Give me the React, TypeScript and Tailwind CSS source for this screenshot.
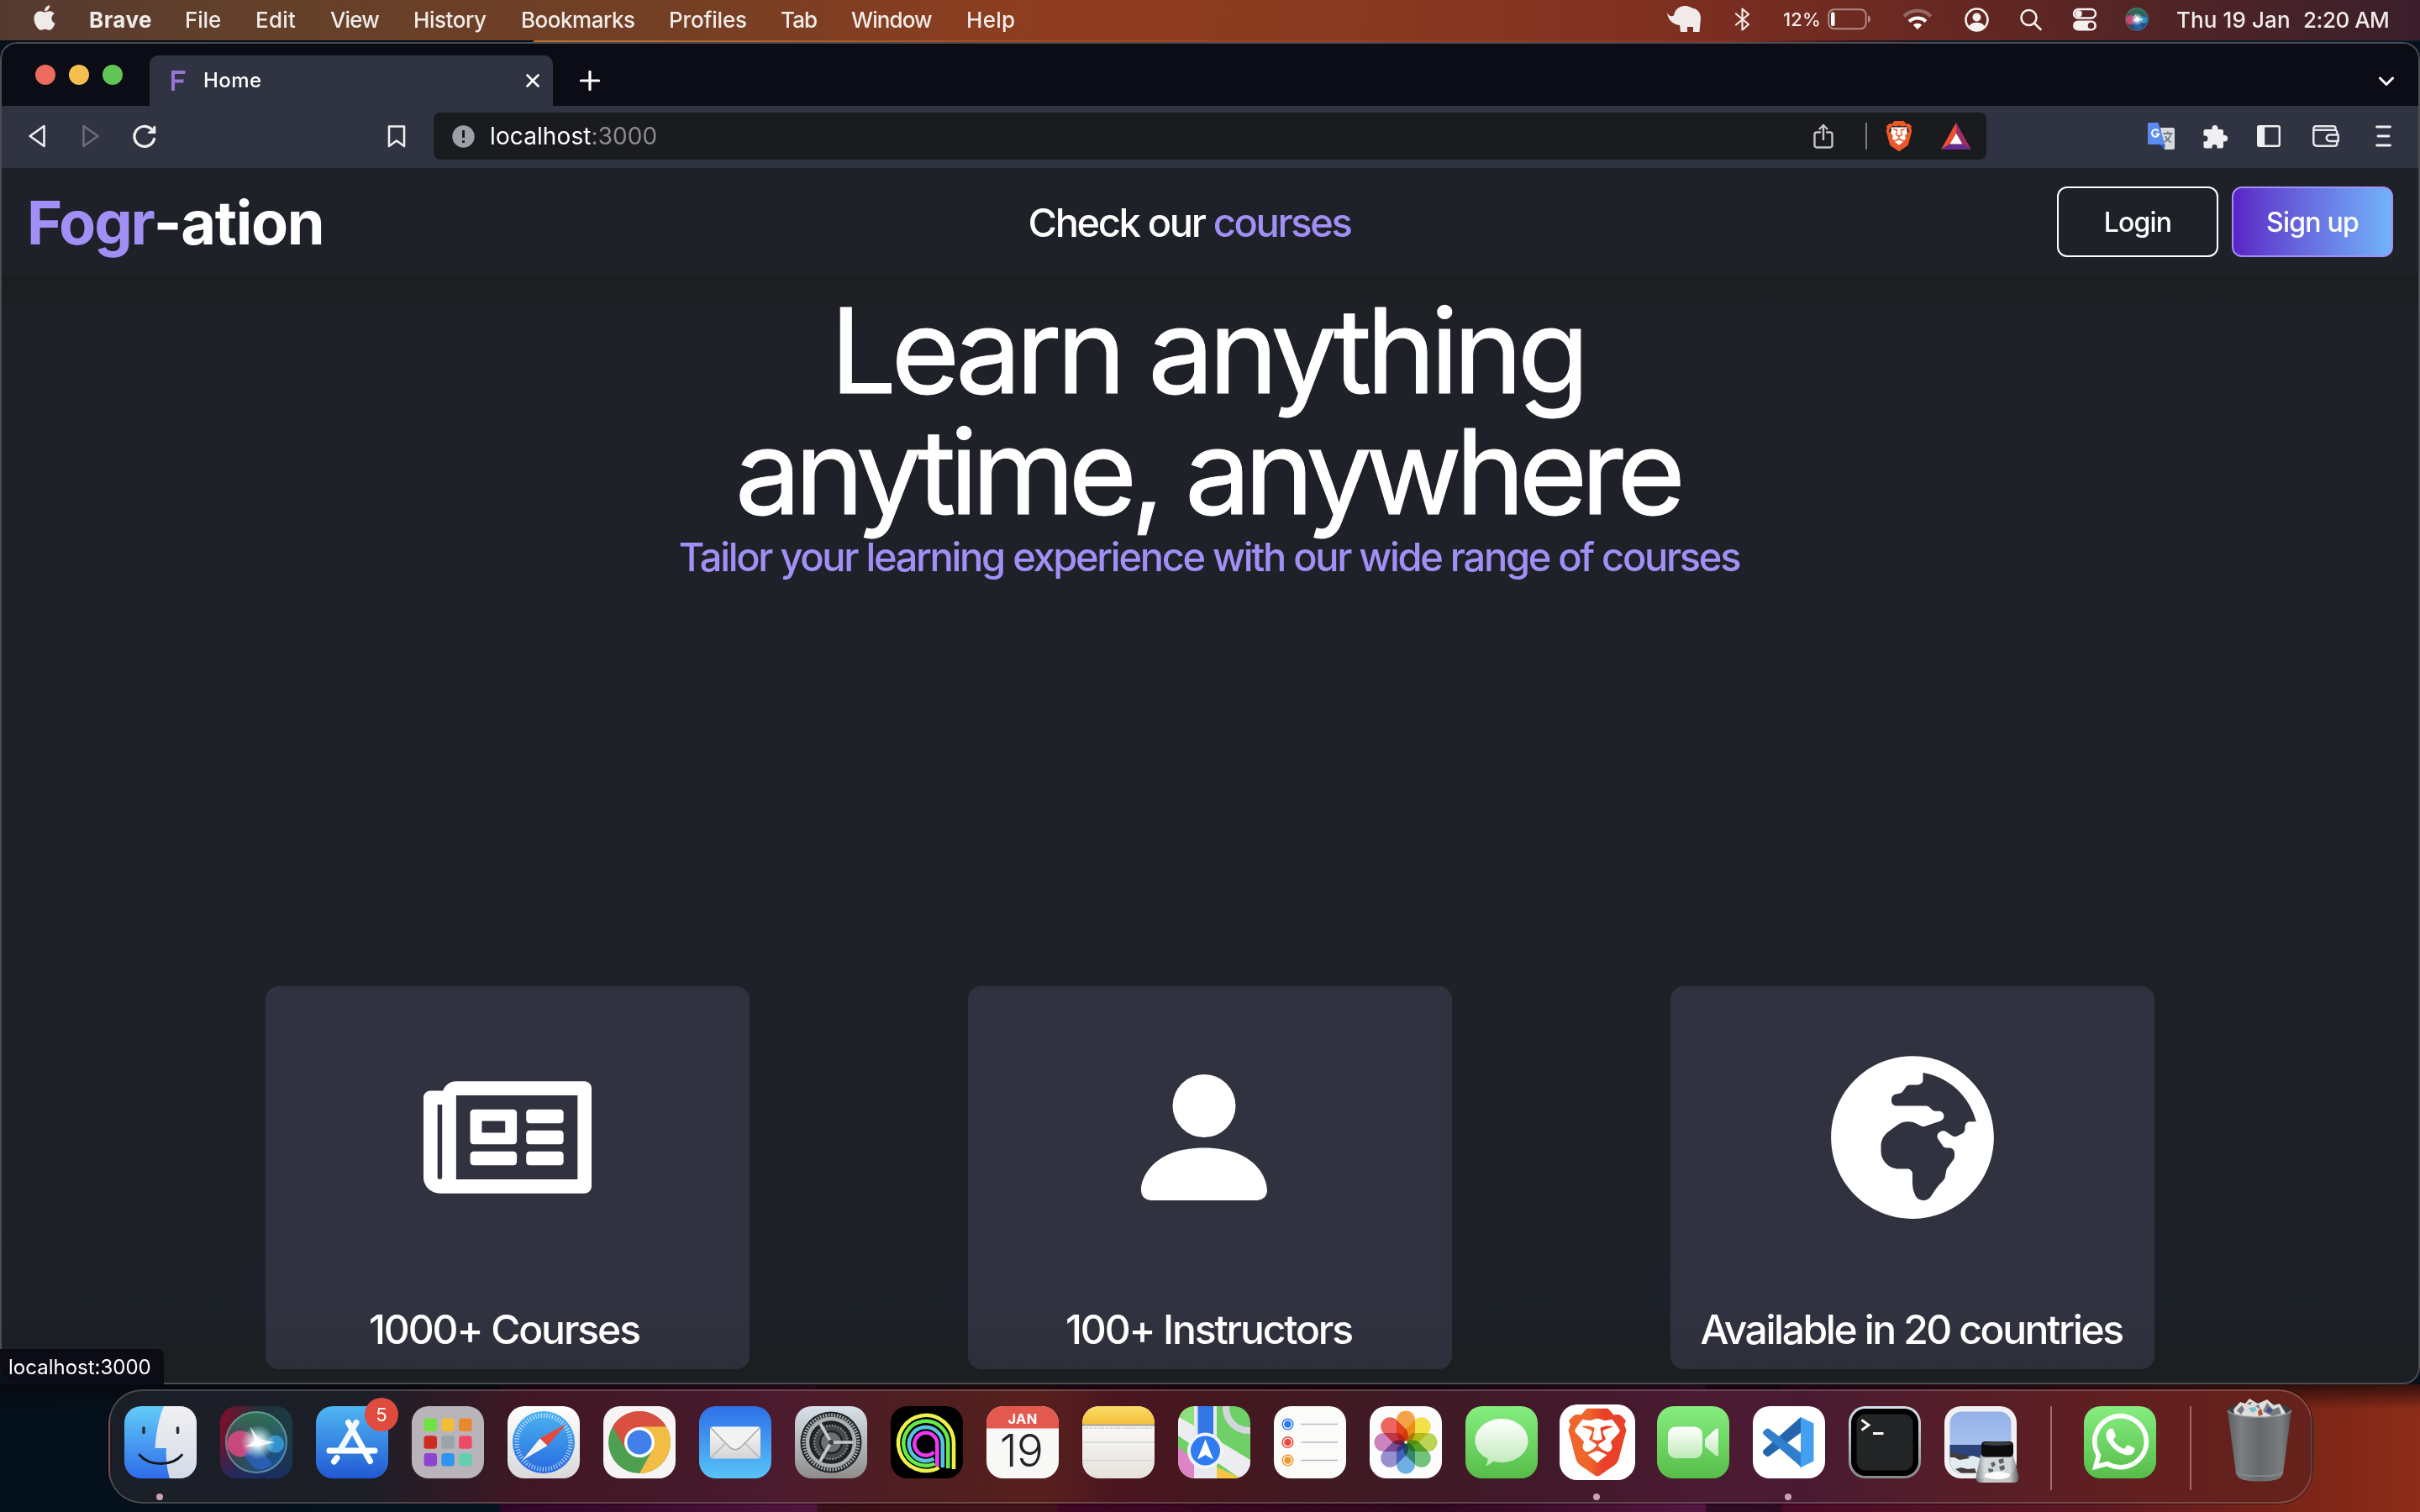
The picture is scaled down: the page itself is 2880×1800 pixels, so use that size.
import React from "react";
import { FaApple, FaWhatsapp } from "react-icons/fa";
import { SiBrave } from "react-icons/si";

/* ---------- macOS menu bar ---------- */

const menus = [
  { label: "Brave", cls: "w-[114px] font-bold tracking-[0.45px]" },
  { label: "File", cls: "w-[84px] tracking-[-0.14px]" },
  { label: "Edit", cls: "w-[89px] tracking-[0.23px]" },
  { label: "View", cls: "w-[99px] tracking-[-0.9px]" },
  { label: "History", cls: "w-[128px] tracking-[-0.45px]" },
  { label: "Bookmarks", cls: "w-[176px] tracking-[-0.48px]" },
  { label: "Profiles", cls: "w-[133px] tracking-[-0.18px]" },
  { label: "Tab", cls: "w-[84px] tracking-[-0.9px]" },
  { label: "Window", cls: "w-[137px] tracking-[-0.9px]" },
  { label: "Help", cls: "tracking-[0.27px]" },
];

function MenuBar() {
  return (
    <header className="flex h-12 shrink-0 items-center bg-[linear-gradient(to_right,#553a30_0,#63402a_300px,#743f24_800px,#8f3d20_1240px,#8a3a20_1600px,#803020_1950px,#642722_2350px,#4f2427_2600px,#3a1f2b_2880px)] pb-[2px] text-[26px] font-medium text-[#f0ebe8]">
      <FaApple className="-mt-1 ml-[36px] h-[34px] w-[34px] shrink-0" />
      <nav className="ml-[36px] flex">
        {menus.map((m) => (
          <span key={m.label} className={`block shrink-0 whitespace-nowrap ${m.cls}`}>{m.label}</span>
        ))}
      </nav>
      <div className="ml-auto flex w-[896px] shrink-0 items-center">
        <svg className="h-8 w-10 shrink-0" viewBox="0 0 40 32" fill="currentColor">
          <path d="M0 8C2 12 5 13 8 11.500C9 5 14 0 21 0C26 0 28 2 31 3C37 4 40 9 40 15L38.500 31H31V25H24V31H16L15 23C7 22 1 17 0 8Z" />
        </svg>
        <svg className="ml-10 h-7 w-[19px] shrink-0" viewBox="0 0 19 28" fill="none" stroke="currentColor" strokeWidth="2.2" strokeLinejoin="round" strokeLinecap="round">
          <path d="M2 7.500L17 20L9.500 26.500V1.500L17 8L2 20.500" />
        </svg>
        <span className="ml-[39px] w-[44px] shrink-0 text-[22px] tracking-[0.1px]">12%</span>
        <svg className="ml-[9px] h-[26px] w-[52px] shrink-0" viewBox="0 0 52 26">
          <rect x="1.200" y="1.200" width="44.500" height="23" rx="6.500" fill="none" stroke="#f0ebe8" strokeOpacity=".5" strokeWidth="2" />
          <rect x="4" y="4.500" width="4.500" height="16.500" rx="2" fill="#fff" />
          <path d="M48 8.500C50.500 9.500 51 11 51 12.700S50.500 16 48 17Z" fill="#f0ebe8" fillOpacity=".5" />
        </svg>
        <svg className="ml-[37px] h-[26px] w-9 shrink-0" viewBox="0 0 36 26" fill="none" stroke="#fff" strokeWidth="4">
          <path d="M2 9.500A22.500 22.500 0 0 1 34 9.500" strokeOpacity=".3" />
          <path d="M8 15.500A14.200 14.200 0 0 1 28 15.500" />
          <path d="M18 25L12.800 19.800A7.500 7.500 0 0 1 23.200 19.800Z" fill="#fff" stroke="none" />
        </svg>
        <svg className="ml-[38px] h-[29px] w-[29px] shrink-0" viewBox="0 0 29 29">
          <circle cx="14.500" cy="14.500" r="13" fill="none" stroke="#f5f0ee" strokeWidth="2.600" />
          <circle cx="14.500" cy="11.500" r="5" fill="#f5f0ee" />
          <path d="M5 23C7 18.500 11 17.800 14.500 17.800S22 18.500 24 23C21 26.500 18 27.500 14.500 27.500S8 26.500 5 23Z" fill="#f5f0ee" />
        </svg>
        <svg className="ml-[36px] h-7 w-7 shrink-0" viewBox="0 0 28 28" fill="none" stroke="#f5f0ee" strokeWidth="2.600" strokeLinecap="round">
          <circle cx="11.500" cy="12" r="9" />
          <path d="M18 18.800L25.500 26" />
        </svg>
        <svg className="ml-[35px] h-7 w-[30px] shrink-0" viewBox="0 0 30 28">
          <rect x="2" y="2" width="26" height="10.500" rx="5.250" fill="none" stroke="#f5f0ee" strokeWidth="2.400" />
          <circle cx="7.800" cy="7.200" r="4" fill="#f5f0ee" />
          <rect x="1" y="15.500" width="28" height="12" rx="6" fill="#f5f0ee" />
          <circle cx="22.500" cy="21.500" r="3.800" fill="#5a2627" />
        </svg>
        <svg className="ml-[33px] h-7 w-7 shrink-0" viewBox="0 0 86 86">
          <SiriOrb cx={43} cy={43} r={42} id="mini" />
        </svg>
        <span className="ml-[33px] w-[151px] shrink-0 whitespace-nowrap tracking-[0.1px]">Thu 19 Jan</span>
        <span className="shrink-0 whitespace-nowrap tracking-[-0.5px]">2:20 AM</span>
      </div>
    </header>
  );
}

/* ---------- Browser chrome ---------- */

function TabStrip() {
  return (
    <div className="flex h-[76px] shrink-0 items-start bg-[#0b0c16]">
      <div className="ml-[42px] mt-[27px] flex gap-4">
        <i className="size-6 rounded-full bg-[#ec6a5e]" />
        <i className="size-6 rounded-full bg-[#f4bf4f]" />
        <i className="size-6 rounded-full bg-[#61c554]" />
      </div>
      <div className="ml-8 mt-4 flex h-[60px] w-[480px] items-center rounded-t-[10px] bg-[#303341]">
        <svg className="ml-[26px] h-6 w-[17px]" viewBox="0 0 17 24" fill="none" stroke="#9474d4" strokeWidth="4">
          <path d="M2 24V2H16.500M2 12.500H14.500" />
        </svg>
        <span className="ml-[21px] text-2xl font-medium tracking-[0.4px] text-white">Home</span>
        <svg className="ml-auto mr-4 size-4" viewBox="0 0 16 16" stroke="#fff" strokeWidth="2.600" strokeLinecap="round">
          <path d="M1.500 1.500L14.500 14.500M14.500 1.500L1.500 14.500" />
        </svg>
      </div>
      <svg className="ml-8 mt-[34px] size-6" viewBox="0 0 24 24" stroke="#fff" strokeWidth="3.200" strokeLinecap="round">
        <path d="M12 1.500V22.500M1.500 12H22.500" />
      </svg>
      <svg className="ml-auto mr-[31px] mt-[41px] h-3 w-[18px]" viewBox="0 0 18 12" fill="none" stroke="#fff" strokeWidth="3" strokeLinecap="round" strokeLinejoin="round">
        <path d="M1.500 2L9 9.500L16.500 2" />
      </svg>
    </div>
  );
}

function Toolbar() {
  return (
    <div className="flex h-[74px] shrink-0 items-center bg-[#303341] pb-[2px]">
      <svg className="ml-[34px] h-7 w-5 shrink-0" viewBox="0 0 20 28" fill="none" stroke="#f0f0f2" strokeWidth="2.600" strokeLinejoin="round">
        <path d="M18.500 2V26L1.700 14Z" />
      </svg>
      <svg className="ml-11 h-7 w-5 shrink-0" viewBox="0 0 20 28" fill="none" stroke="#6a6c78" strokeWidth="2.600" strokeLinejoin="round">
        <path d="M1.500 2V26L18.500 14Z" />
      </svg>
      <svg className="ml-[40px] h-7 w-7 shrink-0" viewBox="0 0 28 28" fill="none" stroke="#f0f0f2" strokeWidth="3.200" strokeLinecap="round">
        <path d="M25.500 17.500A12 12 0 1 1 22 5.500" />
        <path d="M27 1.500V11H17.500Z" fill="#f0f0f2" stroke="none" />
        <path d="M25.700 3.500V9.500H20" />
      </svg>
      <svg className="ml-[275px] h-[27px] w-[22px] shrink-0" viewBox="0 0 22 27" fill="none" stroke="#f0f0f2" strokeWidth="2.600" strokeLinejoin="round">
        <path d="M2 1.500H20V25L11 18.500L2 25Z" />
      </svg>
      <div className="ml-[33px] flex h-14 w-[1848px] shrink-0 items-center rounded-lg bg-[#1a1b1f]">
        <svg className="ml-[22px] size-[27px]" viewBox="0 0 27 27">
          <circle cx="13.500" cy="13.500" r="13.200" fill="#9aa0a6" />
          <path d="M13.500 6V15M13.500 18.300V21" stroke="#1a1b1f" strokeWidth="3" />
        </svg>
        <span className="ml-[18px] text-[28px] tracking-[0.1px] text-white">localhost<span className="text-[#8b8c90]">:3000</span></span>
        <svg className="ml-auto h-[30px] w-6" viewBox="0 0 24 30" fill="none" stroke="#c4c5c9" strokeWidth="2.400" strokeLinecap="round" strokeLinejoin="round">
          <path d="M8 10.500H4A2.500 2.500 0 0 0 1.500 13V26A2.500 2.500 0 0 0 4 28.500H20A2.500 2.500 0 0 0 22.500 26V13A2.500 2.500 0 0 0 20 10.500H16M12 19V2M7.500 6.500L12 2L16.500 6.500" />
        </svg>
        <i className="ml-[38px] h-8 w-[2px] bg-[#7b7c80]" />
        <svg className="ml-[20px] h-9 w-9" viewBox="0 0 24 24">
          <path d="M6 5H18L19 14L12 21L5 14Z" fill="#fff" />
          <SiBrave x="0" y="0" size={24} color="#ee5727" />
        </svg>
        <svg className="ml-[32px] mr-[18px] h-8 w-9" viewBox="0 0 36 32">
          <path d="M18 0L0 32L10.500 25.500L18 12Z" fill="#f0502d" />
          <path d="M18 0L36 32L25.500 25.500L18 12Z" fill="#9e2d68" />
          <path d="M0 32H36L25.500 25.500H10.500Z" fill="#662d91" />
          <path d="M18 12.500L25.500 25.500H10.500Z" fill="#fff" />
        </svg>
      </div>
      <svg className="ml-[192px] size-8" viewBox="0 0 32 32">
        <path d="M15 6H30A2 2 0 0 1 32 8V30A2 2 0 0 1 30 32H20Z" fill="#d8dadd" />
        <path d="M2 0H12.500L20.500 26H2A2 2 0 0 1 0 24V2A2 2 0 0 1 2 0Z" fill="#5a8cf0" />
        <path d="M14 26H20.500L20 32Z" fill="#3355c8" />
        <path d="M18.500 13H29.500M24 10.500V13M27.500 13C26.500 18 22.500 21.500 20 23M21 16C22.500 19.500 25 22 28 23.500" fill="none" stroke="#6c7a85" strokeWidth="1.800" />
        <path d="M12.500 10A4.200 4.200 0 1 0 13.200 13.500H9.500" fill="none" stroke="#fff" strokeWidth="2" />
      </svg>
      <svg className="ml-[33px] size-[31px]" viewBox="0 0 31 31" fill="#f0f0f2">
        <path d="M11.500 5.500A3.500 3.500 0 0 1 18.500 5.500V7H22.500A2.500 2.500 0 0 1 25 9.500V14H26.500A3.700 3.700 0 0 1 26.500 21.400H25V27A2.500 2.500 0 0 1 22.500 29.500H17.500V28A3 3 0 0 0 11.500 28V29.500H4A2.500 2.500 0 0 1 1.500 27V21.500H3A3.500 3.500 0 0 0 3 14.500H1.500V9.500A2.500 2.500 0 0 1 4 7H11.500Z" />
      </svg>
      <svg className="ml-[34px] h-[26px] w-7" viewBox="0 0 28 26">
        <rect x="1.200" y="1.200" width="25.600" height="23.600" rx="1.500" fill="none" stroke="#f0f0f2" strokeWidth="2.400" />
        <rect x="1.200" y="1.200" width="8" height="23.600" fill="#f0f0f2" />
      </svg>
      <svg className="ml-[38px] h-[26px] w-8" viewBox="0 0 32 26" fill="none" stroke="#e6e7ea" strokeWidth="2.500" strokeLinejoin="round">
        <path d="M27.500 6V4A2.700 2.700 0 0 0 24.800 1.300H4A2.700 2.700 0 0 0 1.300 4V21A3.700 3.700 0 0 0 5 24.700H26.500A2.700 2.700 0 0 0 29.200 22V8.500A2.700 2.700 0 0 0 26.500 5.800H2" />
        <path d="M30.700 11.500H20.500A3.700 3.700 0 0 0 20.500 19H30.700Z" fill="#303341" />
      </svg>
      <svg className="ml-[43px] h-[26px] w-[19px]" viewBox="0 0 19 26" stroke="#f0f0f2" strokeWidth="2.800" strokeLinecap="round">
        <path d="M1.500 2H17.500M3 13H16M1.500 24H17.500" />
      </svg>
    </div>
  );
}

/* ---------- Site ---------- */

function SiteNav() {
  return (
    <div className="grid h-32 shrink-0 grid-cols-3 items-center bg-[#1e2128] px-8 text-white">
      <div className="pt-[2px] text-[72px] leading-none font-bold tracking-[-1.3px]">
        <span className="tracking-[-2.1px] text-[#a18ff6]">Fogr</span>-ation
      </div>
      <div className="-ml-[49px] pt-px text-center text-[47px] leading-none font-medium tracking-[-2.35px]">
        Check our <span className="text-[#a18ff6]">courses</span>
      </div>
      <div className="flex justify-end gap-4 text-[32px] font-medium tracking-[-0.8px]">
        <button className="h-[84px] w-48 rounded-xl border-2 border-white pt-[2px]">Login</button>
        <button className="h-[84px] w-48 rounded-xl border-2 border-[#a18ff6] bg-linear-to-r from-[#5b20c6] to-[#72b2fa] pt-[2px]">Sign up</button>
      </div>
    </div>
  );
}

function NewspaperIcon() {
  return (
    <svg className="h-[200px] w-[200px]" viewBox="0 0 576 512" fill="currentColor">
      <path d="M552 64H112c-20.858 0-38.643 13.377-45.248 32H24c-13.255 0-24 10.745-24 24v272c0 30.928 25.072 56 56 56h496c13.255 0 24-10.745 24-24V88c0-13.255-10.745-24-24-24zM48 392V144h16v248c0 4.411-3.589 8-8 8s-8-3.589-8-8zm480 8H111.422c.374-2.614.578-5.283.578-8V112h416v288zM172 280h136c6.627 0 12-5.373 12-12v-96c0-6.627-5.373-12-12-12H172c-6.627 0-12 5.373-12 12v96c0 6.627 5.373 12 12 12zm28-80h80v40h-80v-40zm-40 140v-24c0-6.627 5.373-12 12-12h136c6.627 0 12 5.373 12 12v24c0 6.627-5.373 12-12 12H172c-6.627 0-12-5.373-12-12zm192 0v-24c0-6.627 5.373-12 12-12h104c6.627 0 12 5.373 12 12v24c0 6.627-5.373 12-12 12H364c-6.627 0-12-5.373-12-12zm0-144v-24c0-6.627 5.373-12 12-12h104c6.627 0 12 5.373 12 12v24c0 6.627-5.373 12-12 12H364c-6.627 0-12-5.373-12-12zm0 72v-24c0-6.627 5.373-12 12-12h104c6.627 0 12 5.373 12 12v24c0 6.627-5.373 12-12 12H364c-6.627 0-12-5.373-12-12z" />
    </svg>
  );
}

function PersonIcon() {
  return (
    <svg className="-ml-[14px] h-[200px] w-[200px]" viewBox="0 0 16 16" fill="currentColor">
      <path d="M3 14s-1 0-1-1 1-4 6-4 6 3 6 4-1 1-1 1H3zm5-6a3 3 0 1 0 0-6 3 3 0 0 0 0 6z" />
    </svg>
  );
}

function GlobeIcon() {
  return (
    <svg className="h-[200px] w-[194px]" viewBox="0 0 496 512" fill="currentColor">
      <path d="M248 8C111.030 8 0 119.030 0 256s111.030 248 248 248 248-111.030 248-248S384.970 8 248 8zm160 215.500v6.930c0 5.870-3.320 11.240-8.570 13.860l-15.390 7.700a15.485 15.485 0 0 1-15.530-.97l-18.210-12.140a15.520 15.520 0 0 0-13.500-1.810l-2.650.88c-9.700 3.230-13.660 14.790-7.990 23.300l13.240 19.860c2.870 4.310 7.710 6.900 12.890 6.900h8.210c8.560 0 15.500 6.940 15.500 15.500v11.340c0 3.350-1.090 6.620-3.100 9.300l-18.740 24.980c-1.420 1.900-2.390 4.100-2.830 6.430l-4.300 22.830c-.62 3.290-2.290 6.290-4.760 8.560a159.608 159.608 0 0 0-25 29.160l-13.030 19.550a27.756 27.756 0 0 1-23.090 12.360c-10.510 0-20.120-5.940-24.820-15.340a78.902 78.902 0 0 1-8.330-35.290V367.500c0-8.560-6.940-15.500-15.500-15.500h-25.880c-14.490 0-28.380-5.760-38.630-16a54.659 54.659 0 0 1-16-38.630v-14.060c0-17.190 8.100-33.380 21.850-43.700l27.580-20.690a54.663 54.663 0 0 1 32.780-10.930h.89c8.480 0 16.850 1.970 24.430 5.770l14.720 7.360c3.680 1.840 7.930 2.140 11.830.84l47.310-15.770c6.330-2.110 10.600-8.030 10.600-14.700 0-8.560-6.940-15.500-15.500-15.500h-10.090c-4.110 0-8.050-1.630-10.960-4.540l-6.920-6.920a15.493 15.493 0 0 0-10.960-4.540H199.500c-8.560 0-15.500-6.940-15.500-15.500v-4.400c0-7.110 4.840-13.310 11.740-15.040l14.450-3.610c3.740-.94 7-3.230 9.140-6.440l8.080-12.110c2.870-4.310 7.710-6.900 12.890-6.900h24.210c8.560 0 15.500-6.940 15.500-15.500v-21.700C359.230 71.630 422.860 131.020 441.930 208H423.500c-8.560 0-15.500 6.940-15.500 15.500z" />
    </svg>
  );
}

const stats = [
  { icon: <NewspaperIcon />, label: "1000+ Courses", cls: "tracking-[-2.1px] -ml-[8px]" },
  { icon: <PersonIcon />, label: "100+ Instructors", cls: "tracking-[-2.15px] -ml-[3px]" },
  { icon: <GlobeIcon />, label: "Available in 20 countries", cls: "tracking-[-2.42px] -ml-[3px]" },
];

function Hero() {
  return (
    <main className="flex flex-1 flex-col items-center bg-[linear-gradient(to_bottom,#1c1d21_0,#1e2127_60px,#1e2128_1100px,#1c2028_1230px,#1c1e22_1280px,#1d1e21_1320px)] text-white">
      <h1 className="mt-[17px] flex flex-col items-center text-[140px] leading-[144px] whitespace-nowrap">
        <span className="-ml-[7px] tracking-[-6.55px] [-webkit-text-stroke:1px_#fff]">Learn anything</span>
        <span className="-ml-[7px] tracking-[-7.6px] [-webkit-text-stroke:1px_#fff]">anytime, anywhere</span>
      </h1>
      <p className="-ml-[2px] h-[60px] text-[47px] leading-[60px] font-medium tracking-[-2.3px] whitespace-nowrap text-[#a18ff6]">
        Tailor your learning experience with our wide range of courses
      </p>
      <div className="mt-[481px] flex gap-[260px]">
        {stats.map((s) => (
          <section key={s.label} className="flex h-[456px] w-[576px] flex-col items-center rounded-2xl bg-[linear-gradient(to_bottom,#31323f_85%,#2e2f3b)] pt-20">
            {s.icon}
            <p className={`mt-[99px] text-[48px] leading-[60px] font-medium whitespace-nowrap ${s.cls}`}>{s.label}</p>
          </section>
        ))}
      </div>
    </main>
  );
}

function BrowserWindow() {
  return (
    <div className="relative flex h-[1598px] shrink-0 flex-col overflow-hidden rounded-[20px]">
      <TabStrip />
      <Toolbar />
      <SiteNav />
      <Hero />
      <div className="pointer-events-none absolute inset-0 rounded-[20px] border-2 border-[#4b4d53]" />
      <div className="absolute bottom-0 left-0 flex h-[42px] w-[195px] items-center rounded-tr-lg bg-[#0b0c16] pt-px pl-[10px] text-2xl text-white">localhost:3000</div>
    </div>
  );
}

/* ---------- Dock ---------- */

function SiriOrb({ cx, cy, r, id }: { cx: number; cy: number; r: number; id: string }) {
  return (
    <g>
      <defs>
        <radialGradient id={`${id}-core`}>
          <stop offset="0" stopColor="#fff" />
          <stop offset=".25" stopColor="#f0ffff" stopOpacity=".9" />
          <stop offset="1" stopColor="#bff" stopOpacity="0" />
        </radialGradient>
        <linearGradient id={`${id}-ball`} x1="0" y1=".2" x2="1" y2=".9">
          <stop offset="0" stopColor="#6b2540" />
          <stop offset=".45" stopColor="#2f4a58" />
          <stop offset="1" stopColor="#1655a0" />
        </linearGradient>
        <linearGradient id={`${id}-top`} x1="0" y1="0" x2="0" y2="1">
          <stop offset="0" stopColor="#2a7355" />
          <stop offset=".6" stopColor="#2f7a63" stopOpacity="0" />
        </linearGradient>
      </defs>
      <circle cx={cx} cy={cy} r={r} fill={`url(#${id}-ball)`} />
      <circle cx={cx} cy={cy} r={r} fill={`url(#${id}-top)`} />
      <ellipse cx={cx - r * 0.5} cy={cy + r * 0.05} rx={r * 0.44} ry={r * 0.42} fill="#e84a86" fillOpacity=".8" />
      <ellipse cx={cx + r * 0.62} cy={cy + r * 0.06} rx={r * 0.28} ry={r * 0.28} fill="#3aa0e0" fillOpacity=".8" />
      <path d={`M${cx - r * 0.4} ${cy + r * 0.4}Q${cx} ${cy + r * 1.15} ${cx + r * 0.5} ${cy + r * 0.7}L${cx} ${cy}Z`} fill="#2f6ce0" fillOpacity=".55" />
      <circle cx={cx + r * 0.05} cy={cy} r={r * 0.55} fill={`url(#${id}-core)`} />
      <path d={`M${cx - r * 0.2} ${cy - r * 0.5}L${cx + r * 0.1} ${cy - r * 0.1}L${cx + r * 0.6} ${cy}L${cx + r * 0.1} ${cy + r * 0.12}L${cx - r * 0.35} ${cy + r * 0.15}L${cx - r * 0.05} ${cy - r * 0.05}Z`} fill="#fff" fillOpacity=".8" />
      <circle cx={cx} cy={cy} r={r - 1} fill="none" stroke="#8fb8c0" strokeOpacity=".55" strokeWidth="2" />
    </g>
  );
}

function Finder() {
  return (
    <>
      <defs>
        <linearGradient id="fd" x1="0" y1="0" x2="0" y2="1"><stop offset="0" stopColor="#62ccf8" /><stop offset="1" stopColor="#2f6cea" /></linearGradient>
        <linearGradient id="fl" x1="0" y1="0" x2="0" y2="1"><stop offset="0" stopColor="#f1f0f2" /><stop offset="1" stopColor="#d3dbe8" /></linearGradient>
      </defs>
      <rect width="86" height="86" fill="url(#fd)" />
      <path d="M47 0C41 14 37.500 32 36.600 50H50C49 62 51 76 54 86H86V0Z" fill="url(#fl)" />
      <path d="M23 26V31.500M63.500 26V31.500" stroke="#2b3036" strokeWidth="3.600" strokeLinecap="round" />
      <path d="M18 58C30 72 57 72 68.500 58" fill="none" stroke="#16191d" strokeWidth="2.800" strokeLinecap="round" />
    </>
  );
}

function Siri() {
  return (
    <>
      <defs>
        <linearGradient id="sb" x1="0" y1=".3" x2="1" y2=".5"><stop offset="0" stopColor="#7c0f2c" /><stop offset=".5" stopColor="#20323c" /><stop offset="1" stopColor="#1a3c44" /></linearGradient>
        <linearGradient id="sc" x1="0" y1="0" x2="0" y2="1"><stop offset=".5" stopColor="#1b2a5e" stopOpacity="0" /><stop offset="1" stopColor="#1b2a6e" stopOpacity=".8" /></linearGradient>
      </defs>
      <rect width="86" height="86" fill="url(#sb)" />
      <rect width="86" height="86" fill="url(#sc)" />
      <SiriOrb cx={43} cy={43} r={37} id="dock" />
    </>
  );
}

function AppStore() {
  return (
    <>
      <defs><linearGradient id="as" x1="0" y1="0" x2="0" y2="1"><stop offset="0" stopColor="#4fb6f3" /><stop offset="1" stopColor="#2159d3" /></linearGradient></defs>
      <rect width="86" height="86" fill="url(#as)" />
      <g stroke="#fff" strokeWidth="7" strokeLinecap="round">
        <path d="M38.500 19.500L64.500 65.500M16 53H70M25 61.500L21.500 66" />
        <path d="M48 19.500L29.500 51" stroke="#f2f8ff" />
      </g>
    </>
  );
}

const padColors = ["#70e23f", "#f4bd36", "#e88a2c", "#cf2a1f", "#9aa3a8", "#ee4a63", "#8e44d0", "#2f93f2", "#62cfae"];

function Launchpad() {
  return (
    <>
      <rect width="86" height="86" fill="#b9b4b9" />
      {padColors.map((c, i) => (
        <rect key={c} x={14.500 + (i % 3) * 20.800} y={14.500 + Math.floor(i / 3) * 20.800} width="15.500" height="15.500" rx="3.500" fill={c} />
      ))}
    </>
  );
}

function Safari() {
  return (
    <>
      <defs>
        <linearGradient id="sw" x1="0" y1="0" x2="0" y2="1"><stop offset="0" stopColor="#fff" /><stop offset="1" stopColor="#d9d9da" /></linearGradient>
        <linearGradient id="sf" x1="0" y1="0" x2="0" y2="1"><stop offset="0" stopColor="#4cb4f0" /><stop offset="1" stopColor="#2668e0" /></linearGradient>
      </defs>
      <rect width="86" height="86" fill="url(#sw)" />
      <circle cx="43" cy="43" r="37" fill="url(#sf)" />
      <circle cx="43" cy="43" r="32" fill="none" stroke="#fff" strokeOpacity=".7" strokeWidth="5.500" strokeDasharray="1.100 2.250" />
      <path d="M70 21L47.500 47L38.500 38.500Z" fill="#e8483a" />
      <path d="M17.500 64.500L38.500 38.500L47.500 47Z" fill="#f3f3f4" />
    </>
  );
}

function Chrome() {
  return (
    <>
      <rect width="86" height="86" fill="#f7f4f6" />
      <circle cx="43" cy="43" r="37" fill="#4f9f52" />
      <path d="M11 24.500A37 37 0 0 1 75 24.500L43 25L27.400 52Z" fill="#d94f40" />
      <path d="M75 24.500A37 37 0 0 1 43 80L58.600 52L43 24.500Z" fill="#f3bd45" />
      <circle cx="43" cy="43" r="18" fill="#fff" />
      <circle cx="43" cy="43" r="14.600" fill="#4180ea" />
    </>
  );
}

function Mail() {
  return (
    <>
      <defs>
        <linearGradient id="ml" x1="0" y1="0" x2="0" y2="1"><stop offset="0" stopColor="#2f6fe8" /><stop offset="1" stopColor="#58c4f8" /></linearGradient>
        <linearGradient id="me" x1="0" y1="0" x2="0" y2="1"><stop offset="0" stopColor="#fafafa" /><stop offset="1" stopColor="#d4d4d6" /></linearGradient>
      </defs>
      <rect width="86" height="86" fill="url(#ml)" />
      <rect x="13" y="24.500" width="60" height="38" rx="3.500" fill="url(#me)" />
      <path d="M14.500 61L31 44.500M71.500 61L55 44.500" stroke="#b4b4b6" strokeWidth="1.500" />
      <path d="M14 26L37 49.500Q43 54 49 49.500L72 26" fill="#f2f2f3" stroke="#a9a9ab" strokeWidth="1.600" />
    </>
  );
}

function Settings() {
  return (
    <>
      <defs><linearGradient id="st" x1="0" y1="0" x2="0" y2="1"><stop offset="0" stopColor="#d8e2ea" /><stop offset="1" stopColor="#8f8d8b" /></linearGradient></defs>
      <rect width="86" height="86" fill="url(#st)" />
      <circle cx="43" cy="43" r="36.500" fill="#1f2326" />
      <circle cx="43" cy="43" r="32.500" fill="none" stroke="#a9b0b4" strokeWidth="4" strokeDasharray="1.800 1.600" />
      <circle cx="43" cy="43" r="28" fill="none" stroke="#a9afb2" strokeWidth="4.500" />
      <circle cx="43" cy="43" r="20" fill="#43484b" stroke="#7c8285" strokeWidth="2.500" strokeDasharray="2 1.500" />
      <circle cx="43" cy="43" r="13" fill="#6b6f71" stroke="#1f2326" strokeWidth="2.500" />
      <path d="M43 43H69M43 43L30 20.500M43 43L30 65.500" stroke="#c3c8ca" strokeWidth="3.600" />
      <circle cx="43" cy="43" r="3" fill="#3a3e40" />
    </>
  );
}

function Rainbow() {
  return (
    <>
      <rect width="86" height="86" fill="#000" />
      <g fill="none" strokeWidth="4.600">
        <path d="M57.500 73A33 33 0 1 1 75 44.500V75" stroke="#ecf24a" />
        <path d="M52.500 68.500A26.500 26.500 0 1 1 68.300 44.500V74" stroke="#66ea4a" />
        <path d="M51.500 62.500A20 20 0 1 1 61.800 44.500V73" stroke="#55c3e0" />
        <path d="M51.500 54.500A13.500 13.500 0 1 1 55.300 44.500V71.500" stroke="#e93af0" />
      </g>
    </>
  );
}

function Calendar() {
  return (
    <>
      <rect width="86" height="86" fill="#f8f8f7" />
      <rect width="86" height="26.500" fill="#e4594f" />
      <text x="43" y="20.500" textAnchor="middle" fontFamily="Inter" fontSize="16.500" fontWeight="700" fill="#fff" letterSpacing=".3">JAN</text>
      <text x="41.500" y="72" textAnchor="middle" fontFamily="Inter" fontSize="53" fontWeight="300" fill="#222426" letterSpacing="-.5">19</text>
    </>
  );
}

function Notes() {
  return (
    <>
      <defs>
        <linearGradient id="nt" x1="0" y1="0" x2="0" y2="1"><stop offset="0" stopColor="#f9dc6a" /><stop offset="1" stopColor="#f4c036" /></linearGradient>
        <linearGradient id="nb" x1="0" y1="0" x2="0" y2="1"><stop offset=".2" stopColor="#fafaf9" /><stop offset="1" stopColor="#e6e2db" /></linearGradient>
      </defs>
      <rect width="86" height="86" fill="url(#nb)" />
      <rect width="86" height="21.500" fill="url(#nt)" />
      <path d="M0 22.500H86" stroke="#a09a8c" strokeWidth="2" />
      <path d="M2 26.200H84" stroke="#c3c1bd" strokeWidth="1.800" strokeDasharray="1.500 1.700" />
      <path d="M0 43H86M0 64.500H86" stroke="#d5d5d9" strokeWidth="1.600" />
    </>
  );
}

function Maps() {
  return (
    <>
      <rect width="86" height="86" fill="#6fd068" />
      <path d="M0 10L20 27V0H0Z" fill="#8ee07c" />
      <path d="M0 48L30 74V86H0Z" fill="#dd84c8" />
      <path d="M45 86V72L75 86Z" fill="#f5c643" />
      <circle cx="84" cy="2" r="27" fill="none" stroke="#d3d6dc" strokeWidth="8" />
      <path d="M0 12L86 64V86H74L0 35Z" fill="#ededf1" />
      <path d="M19 0H46V86H19Z" fill="#e8e9ee" />
      <path d="M23.500 0H42V50H23.500Z" fill="#3478e8" />
      <circle cx="32.500" cy="53" r="21.500" fill="#f1f2f5" />
      <circle cx="32.500" cy="53" r="17.500" fill="#2f7cf2" />
      <path d="M32.500 39.500L42 63.500L32.500 58L23 63.500Z" fill="#fff" />
    </>
  );
}

function Reminders() {
  return (
    <>
      <rect width="86" height="86" fill="#fbfbfa" />
      {["#2f7cf2", "#e64a3c", "#f0982f"].map((c, i) => (
        <g key={c}>
          <circle cx="16.500" cy={21.500 + i * 21.500} r="6.300" fill="#fff" stroke={c} strokeWidth="1.500" />
          <circle cx="16.500" cy={21.500 + i * 21.500} r="4.300" fill={c} />
          <path d={`M32 ${21.500 + i * 21.500}H76`} stroke="#b9bbc0" strokeWidth="1.700" />
        </g>
      ))}
    </>
  );
}

const petals = ["#f3962f", "#f2dc2f", "#b2cf3a", "#5fb96a", "#5aa5e0", "#8a80c6", "#c573b5", "#ea5049"];

function Photos() {
  return (
    <>
      <rect width="86" height="86" fill="#fcfcfc" />
      <g className="isolate">
        {petals.map((c, i) => (
          <rect key={c} className="mix-blend-multiply" x="32" y="5.500" width="22" height="37" rx="11" fill={c} fillOpacity=".88" transform={`rotate(${i * 45} 43 43)`} />
        ))}
      </g>
      <circle cx="43" cy="43" r="1.800" fill="#f4f4e8" />
    </>
  );
}

const greenGradient = (id: string) => (
  <defs>
    <linearGradient id={id} x1="0" y1="0" x2="0" y2="1"><stop offset="0" stopColor="#86ee80" /><stop offset="1" stopColor="#56bd49" /></linearGradient>
    <linearGradient id={`${id}w`} x1="0" y1="0" x2="0" y2="1"><stop offset="0" stopColor="#fff" /><stop offset="1" stopColor="#bfeab8" /></linearGradient>
  </defs>
);

function Messages() {
  return (
    <>
      {greenGradient("ms")}
      <rect width="86" height="86" fill="url(#ms)" />
      <path d="M43 15C60.500 15 74.500 26.500 74.500 41S60.500 67 43 67C39 67 36 66.500 33 65.500C31 68 27 70.500 23.500 71C26 68.500 27 65 26.500 62.500C17.500 58.500 11.500 50 11.500 41C11.500 26.500 25.500 15 43 15Z" fill="url(#msw)" />
    </>
  );
}

function BraveIcon() {
  return (
    <>
      <defs><linearGradient id="bv" x1="0" y1="0" x2="1" y2="0"><stop offset=".35" stopColor="#f0652b" /><stop offset=".6" stopColor="#e9402a" /></linearGradient></defs>
      <rect width="90" height="90" fill="#fff" />
      <SiBrave x="4.500" y="4.500" size={81} fill="url(#bv)" />
    </>
  );
}

function FaceTime() {
  return (
    <>
      {greenGradient("ft")}
      <rect width="86" height="86" fill="url(#ft)" />
      <rect x="13" y="24.500" width="41" height="37.500" rx="9" fill="url(#ftw)" />
      <path d="M57 39L70 27Q73 25.500 73 28.500V57.500Q73 60.500 70 59L57 48Z" fill="url(#ftw)" />
    </>
  );
}

function VSCode() {
  return (
    <>
      <rect width="86" height="86" fill="#fff" />
      <path d="M57 13L13 52Q11 54.500 13 57L16 59.500Q18 60.500 20 59L58 31Z" fill="#2466ad" />
      <path d="M13 34Q11 31.500 13 29.500L16 27Q18 26 20 27.500L58 56V73Z" fill="#2f7fcc" />
      <path d="M57 13L72.500 20.500V65.500L57 73C56 74 55.500 73 57 71Z" fill="#459ff0" />
    </>
  );
}

function Terminal() {
  return (
    <>
      <defs><linearGradient id="tm" x1="0" y1="0" x2="0" y2="1"><stop offset="0" stopColor="#d3e2ea" /><stop offset="1" stopColor="#87898a" /></linearGradient></defs>
      <rect width="86" height="86" fill="url(#tm)" />
      <rect x="3" y="3" width="80" height="80" rx="17" fill="#000" />
      <rect x="9.500" y="9.500" width="67" height="67" rx="10" fill="#232425" />
      <path d="M15.500 16.500L24 22.500L15.500 28.500M29 32.500H41.500" fill="none" stroke="#fff" strokeWidth="2.800" />
    </>
  );
}

function Preview() {
  return (
    <>
      <defs>
        <linearGradient id="pv" x1="0" y1="0" x2="0" y2="1"><stop offset="0" stopColor="#92b0ea" /><stop offset="1" stopColor="#b9d0f0" /></linearGradient>
        <linearGradient id="jar" x1="0" y1="0" x2="1" y2="0"><stop offset="0" stopColor="#6f757a" /><stop offset=".2" stopColor="#d3d8db" /><stop offset=".8" stopColor="#cdd2d5" /><stop offset="1" stopColor="#5f6468" /></linearGradient>
      </defs>
      <rect width="86" height="86" rx="20" fill="#f2f1f1" />
      <rect x="6.500" y="6.500" width="73" height="73" rx="14" fill="url(#pv)" />
      <path d="M6.500 46H79.500V65.500A14 14 0 0 1 65.500 79.500H20.500A14 14 0 0 1 6.500 65.500Z" fill="#2c437c" />
      <path d="M6.500 60L20 62L34 59L46 63L79.500 58V65.500A14 14 0 0 1 65.500 79.500H20.500A14 14 0 0 1 6.500 65.500Z" fill="#e2ebf0" />
      <path d="M7 56L12 55L17 58L24 57L30 62L18 64L12 61L7 61ZM13 75L20 73L28 75L36 74L38 79.500H20Z" fill="#453b3a" />
      <path d="M43 58H82L88 82Q90 91 82 91H44Q36 91 38 82Z" fill="url(#jar)" fillOpacity=".92" />
      <path d="M55 68L59 66L61 70L57 73ZM64 64L70 62L71 67L66 69ZM65 72L71 70L72 75L67 77ZM52 74L58 75L58 79L53 79Z" fill="#5d6468" />
      <ellipse cx="63" cy="82.500" rx="15" ry="4.500" fill="#fbfbfb" />
      <rect x="44" y="42" width="38" height="18.500" rx="4.500" fill="#0c0c0d" />
      <ellipse cx="63" cy="44.500" rx="17" ry="2.500" fill="#3b3c3d" />
    </>
  );
}

function WhatsApp() {
  return (
    <>
      {greenGradient("wa")}
      <rect width="86" height="86" fill="url(#wa)" />
      <FaWhatsapp x="5" y="4" size={77} color="#fff" />
    </>
  );
}

function Trash() {
  return (
    <svg className="-mt-2 mb-1 h-[98px] w-[78px] shrink-0 overflow-visible" viewBox="0 0 78 98">
      <defs>
        <linearGradient id="tr" x1="0" y1="0" x2="1" y2="0"><stop offset="0" stopColor="#5c5f61" /><stop offset=".2" stopColor="#7c7f81" /><stop offset=".5" stopColor="#66696b" /><stop offset=".85" stopColor="#7a7d7f" /><stop offset="1" stopColor="#55585a" /></linearGradient>
      </defs>
      <ellipse cx="39" cy="12.500" rx="37" ry="9" fill="#3c3f41" />
      <path d="M8 12L16 3L22 5L27 -1L37 5L48 0L56 7L63 5L70 16L66 22H10Z" fill="#dedede" />
      <path d="M12 13L18 7L21 12L17 18ZM43 14L48 4L55 12L62 9L65 17L54 20ZM24 4L30 3L28 7ZM34 8L38 6L40 12Z" fill="#77797c" />
      <path d="M26 10L34 9L36 13L30 16Z" fill="#7ac0cc" />
      <path d="M49 9L55 12L53 16L47 15Z" fill="#3d5590" />
      <path d="M37 14L41 11L43 18L38 20Z" fill="#b0522f" />
      <path d="M1 13C8 24 70 24 77 13L67 88C65 95 57 97.500 39 97.500S13 95 11 88Z" fill="url(#tr)" />
      <path d="M1 13C8 24 70 24 77 13" fill="none" stroke="#8f9294" strokeWidth="1.500" />
      <path d="M11 86C18 93 60 93 67 86" fill="none" stroke="#8a8d90" strokeWidth="1.500" />
    </svg>
  );
}

type AppEntry = { name: string; art: React.ReactNode; running?: boolean; badge?: string; spill?: boolean };

const dockApps: AppEntry[] = [
  { name: "finder", art: <Finder />, running: true },
  { name: "siri", art: <Siri /> },
  { name: "appstore", art: <AppStore />, badge: "5" },
  { name: "launchpad", art: <Launchpad /> },
  { name: "safari", art: <Safari /> },
  { name: "chrome", art: <Chrome /> },
  { name: "mail", art: <Mail /> },
  { name: "settings", art: <Settings /> },
  { name: "rainbow", art: <Rainbow /> },
  { name: "calendar", art: <Calendar /> },
  { name: "notes", art: <Notes /> },
  { name: "maps", art: <Maps /> },
  { name: "reminders", art: <Reminders /> },
  { name: "photos", art: <Photos /> },
  { name: "messages", art: <Messages /> },
  { name: "brave", art: <BraveIcon />, running: true },
  { name: "facetime", art: <FaceTime /> },
  { name: "vscode", art: <VSCode />, running: true },
  { name: "terminal", art: <Terminal /> },
  { name: "preview", art: <Preview />, spill: true },
];

function DockTile({ app }: { app: AppEntry }) {
  const big = app.name === "brave";
  return (
    <div className="relative flex size-[86px] shrink-0 items-center justify-center">
      <svg
        className={`shrink-0 ${big ? "size-[90px] rounded-[21px]" : "size-[86px] rounded-[20px]"} ${app.spill ? "overflow-visible" : "overflow-hidden"}`}
        viewBox={big ? "0 0 90 90" : "0 0 86 86"}
      >
        {app.art}
      </svg>
      {app.badge && (
        <span className="absolute -top-[10px] -right-[12px] flex size-10 items-center justify-center rounded-full bg-[#df4c3f] text-[22px] text-white">{app.badge}</span>
      )}
      {app.running && <i className="absolute top-[104px] left-[38px] size-2 rounded-full bg-[#c9a3b5]" />}
    </div>
  );
}

function Dock() {
  return (
    <footer className="relative flex h-[152px] shrink-0 items-start bg-[linear-gradient(to_bottom,#0a0406b0_0,#0000_30px),linear-gradient(to_right,#04101c_0,#05121f_594px,#31052a_596px,#3a0a2c_740px,#521540_970px,#3b0f18_974px,#42141a_1256px,#3f0624_1260px,#30071f_1700px,#551641_2028px,#2f0a24_2032px,#2d0a22_2118px,#4a0a28_2122px,#5c1922_2500px,#7a2418_2720px,#8d2d18_2880px)] pt-[6px]">
      <div className="ml-[129px] flex h-[136px] w-[2623px] items-start rounded-[40px] border-2 border-[#ffffff30] bg-[linear-gradient(to_right,#1a1f27_0,#1d1e27_300px,#2e1b25_400px,#421724_500px,#45192a_700px,#4c1b2e_800px,#4e1e20_950px,#57201d_1110px,#4a1521_1200px,#45171f_1300px,#3f1a24_1500px,#42192b_1700px,#4c1b33_1950px,#481a32_2010px,#561e28_2200px,#611f20_2400px,#66221a_2623px)] pt-[18px] pl-[17px] shadow-[0_0_0_1px_#0007]">
        <div className="flex gap-7">
          {dockApps.map((app) => (
            <DockTile key={app.name} app={app} />
          ))}
        </div>
        <i className="ml-10 h-[100px] w-[2px] shrink-0 bg-[#a86865]" />
        <svg className="ml-[38px] size-[86px] shrink-0 overflow-hidden rounded-[20px]" viewBox="0 0 86 86"><WhatsApp /></svg>
        <i className="ml-10 h-[100px] w-[2px] shrink-0 bg-[#a86865]" />
        <div className="ml-[42px]"><Trash /></div>
      </div>
    </footer>
  );
}

export default function App() {
  return (
    <div className="flex h-[1800px] w-[2880px] flex-col overflow-hidden bg-[#07111c] font-['Inter',sans-serif]">
      <MenuBar />
      <div className="h-[2px] shrink-0 bg-[linear-gradient(to_right,#04111d_0,#04111d_634px,#b8722f_636px,#a8481f_1240px,#8f3020_2050px,#3a1420_2200px,#0b1a2a_2300px,#0b1a2a_2880px)]" />
      <BrowserWindow />
      <Dock />
    </div>
  );
}
